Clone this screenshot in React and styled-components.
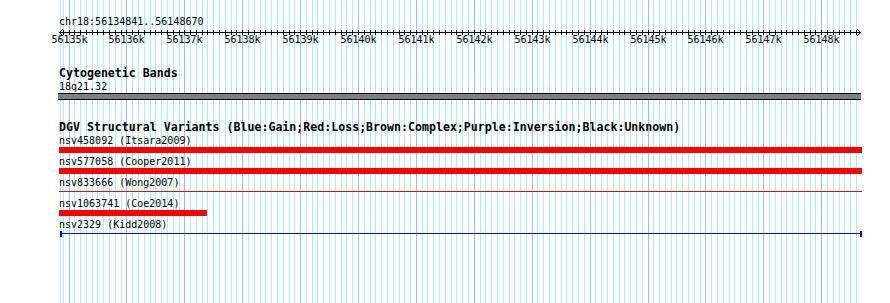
import React from "react";
import styled, { createGlobalStyle } from "styled-components";

const GlobalStyle = createGlobalStyle`
  html, body { margin: 0; padding: 0; background: #ffffff; }
  body { font-family: "DejaVu Sans Mono", monospace; color: #000; }
`;

const START = 56134841;
const END = 56148670;
const ORIGIN_X = 59;
const TRACK_W = 803;
const bpToX = (bp) => Math.floor(69 + (bp - 56135000) * 0.0579);

const gridPositions = [];
for (let i = -1; i <= 136; i++) {
  const bp = 56135000 + i * 100;
  gridPositions.push({ x: bpToX(bp), major: i % 10 === 0, bp });
}

const Page = styled.div`
  position: relative;
  width: 890px;
  height: 303px;
  overflow: hidden;
  background: #ffffff;
`;

const GridLayer = styled.svg`
  position: absolute;
  left: 0;
  top: 0;
  display: block;
`;

const Tracks = styled.div`
  position: relative;
  display: flex;
  flex-direction: column;
  margin-left: ${ORIGIN_X}px;
  width: ${TRACK_W}px;
  padding-top: 15px;
`;

const SmallText = styled.div`
  font-family: "DejaVu Sans Mono", monospace;
  font-size: 10px;
  line-height: ${(p) => p.$lh || 13}px;
  height: ${(p) => p.$lh || 13}px;
  white-space: pre;
  color: #000;
`;

const TrackLabel = styled.div`
  font-family: "DejaVu Sans Mono", monospace;
  font-weight: bold;
  font-size: 11.6px;
  line-height: 13px;
  height: 13px;
  white-space: pre;
  color: #000;
`;

const Section = styled.section`
  display: flex;
  flex-direction: column;
  margin-top: ${(p) => p.$top || 0}px;
`;

const AxisSvg = styled.svg`
  display: block;
  overflow: visible;
`;

const Band = styled.div`
  height: 5px;
  width: ${TRACK_W}px;
  margin-left: -1px;
  background: #808080;
  border-top: 1px solid #000;
  border-bottom: 1px solid #000;
`;

const Feature = styled.div`
  display: flex;
  flex-direction: column;
  height: 19px;
  margin-bottom: 2px;
`;

const GlyphRow = styled.div`
  display: flex;
  align-items: flex-start;
  height: 6px;
`;

const SolidBar = styled.div`
  height: 6px;
  background: ${(p) => p.$color};
`;

const ThinLine = styled.div`
  height: 1px;
  margin-top: 2px;
  background: ${(p) => p.$color};
`;

const SpanWrap = styled.div`
  display: flex;
  align-items: flex-start;
  margin-left: 1px;
`;

const EndTick = styled.div`
  width: 2px;
  height: 6px;
  background: ${(p) => p.$color};
  flex: none;
`;

const SpanLine = styled.div`
  flex: 1;
  height: 1px;
  margin-top: 2px;
  background: ${(p) => p.$color};
`;

const features = [
  { name: "nsv458092 (Itsara2009)", kind: "bar", color: "#ff0000", width: TRACK_W },
  { name: "nsv577058 (Cooper2011)", kind: "bar", color: "#ff0000", width: TRACK_W },
  { name: "nsv833666 (Wong2007)", kind: "line", color: "#ff0000", width: TRACK_W },
  { name: "nsv1063741 (Coe2014)", kind: "bar", color: "#ff0000", width: 148 },
  { name: "nsv2329 (Kidd2008)", kind: "span", color: "#0000ff", width: TRACK_W - 1 },
];

function Glyph({ f }) {
  if (f.kind === "bar") return <SolidBar $color={f.color} style={{ width: f.width }} />;
  if (f.kind === "line") return <ThinLine $color={f.color} style={{ width: f.width }} />;
  return (
    <SpanWrap style={{ width: f.width }}>
      <EndTick $color={f.color} />
      <SpanLine $color={f.color} />
      <EndTick $color={f.color} />
    </SpanWrap>
  );
}

function Grid() {
  return (
    <GridLayer width="890" height="303" shapeRendering="crispEdges">
      <line x1="60.5" y1="0" x2="60.5" y2="303" stroke="#aaeef2" strokeWidth="1" />
      {gridPositions.map((g) => (
        <line
          key={g.bp}
          x1={g.x + 0.5}
          y1="0"
          x2={g.x + 0.5}
          y2="303"
          stroke={g.major ? "#8ec6e6" : "#aaeef2"}
          strokeWidth="1"
        />
      ))}
    </GridLayer>
  );
}

function Ruler() {
  const ox = ORIGIN_X;
  return (
    <AxisSvg width={TRACK_W} height="18" shapeRendering="crispEdges">
      <line x1="0" y1="4.5" x2="802" y2="4.5" stroke="#000" strokeWidth="1" />
      <polyline points="4,1 0.5,4.5 4,8" fill="none" stroke="#000" strokeWidth="1" shapeRendering="auto" />
      <polyline points="798,1 801.5,4.5 798,8" fill="none" stroke="#000" strokeWidth="1" shapeRendering="auto" />
      {gridPositions
        .filter((g) => g.bp >= START && g.bp <= END)
        .map((g) => (
          <line
            key={g.bp}
            x1={g.x - ox + 0.5}
            y1="2"
            x2={g.x - ox + 0.5}
            y2="7"
            stroke="#000"
            strokeWidth="1"
          />
        ))}
      {gridPositions
        .filter((g) => g.major && g.bp >= START)
        .map((g) => (
          <text
            key={"t" + g.bp}
            x={g.x - ox + 0.5}
            y="15"
            textAnchor="middle"
            fontFamily="DejaVu Sans Mono, monospace"
            fontSize="10"
            fill="#000"
          >
            {g.bp / 1000 + "k"}
          </text>
        ))}
    </AxisSvg>
  );
}

export default function App() {
  return (
    <>
      <GlobalStyle />
      <Page>
        <Grid />
        <Tracks>
          <Section>
            <SmallText>chr18:56134841..56148670</SmallText>
            <Ruler />
          </Section>
          <Section $top={21}>
            <TrackLabel>Cytogenetic Bands</TrackLabel>
            <SmallText>18q21.32</SmallText>
            <Band />
          </Section>
          <Section $top={21}>
            <TrackLabel>DGV Structural Variants (Blue:Gain;Red:Loss;Brown:Complex;Purple:Inversion;Black:Unknown)</TrackLabel>
            {features.map((f) => (
              <Feature key={f.name}>
                <SmallText>{f.name}</SmallText>
                <GlyphRow>
                  <Glyph f={f} />
                </GlyphRow>
              </Feature>
            ))}
          </Section>
        </Tracks>
      </Page>
    </>
  );
}
